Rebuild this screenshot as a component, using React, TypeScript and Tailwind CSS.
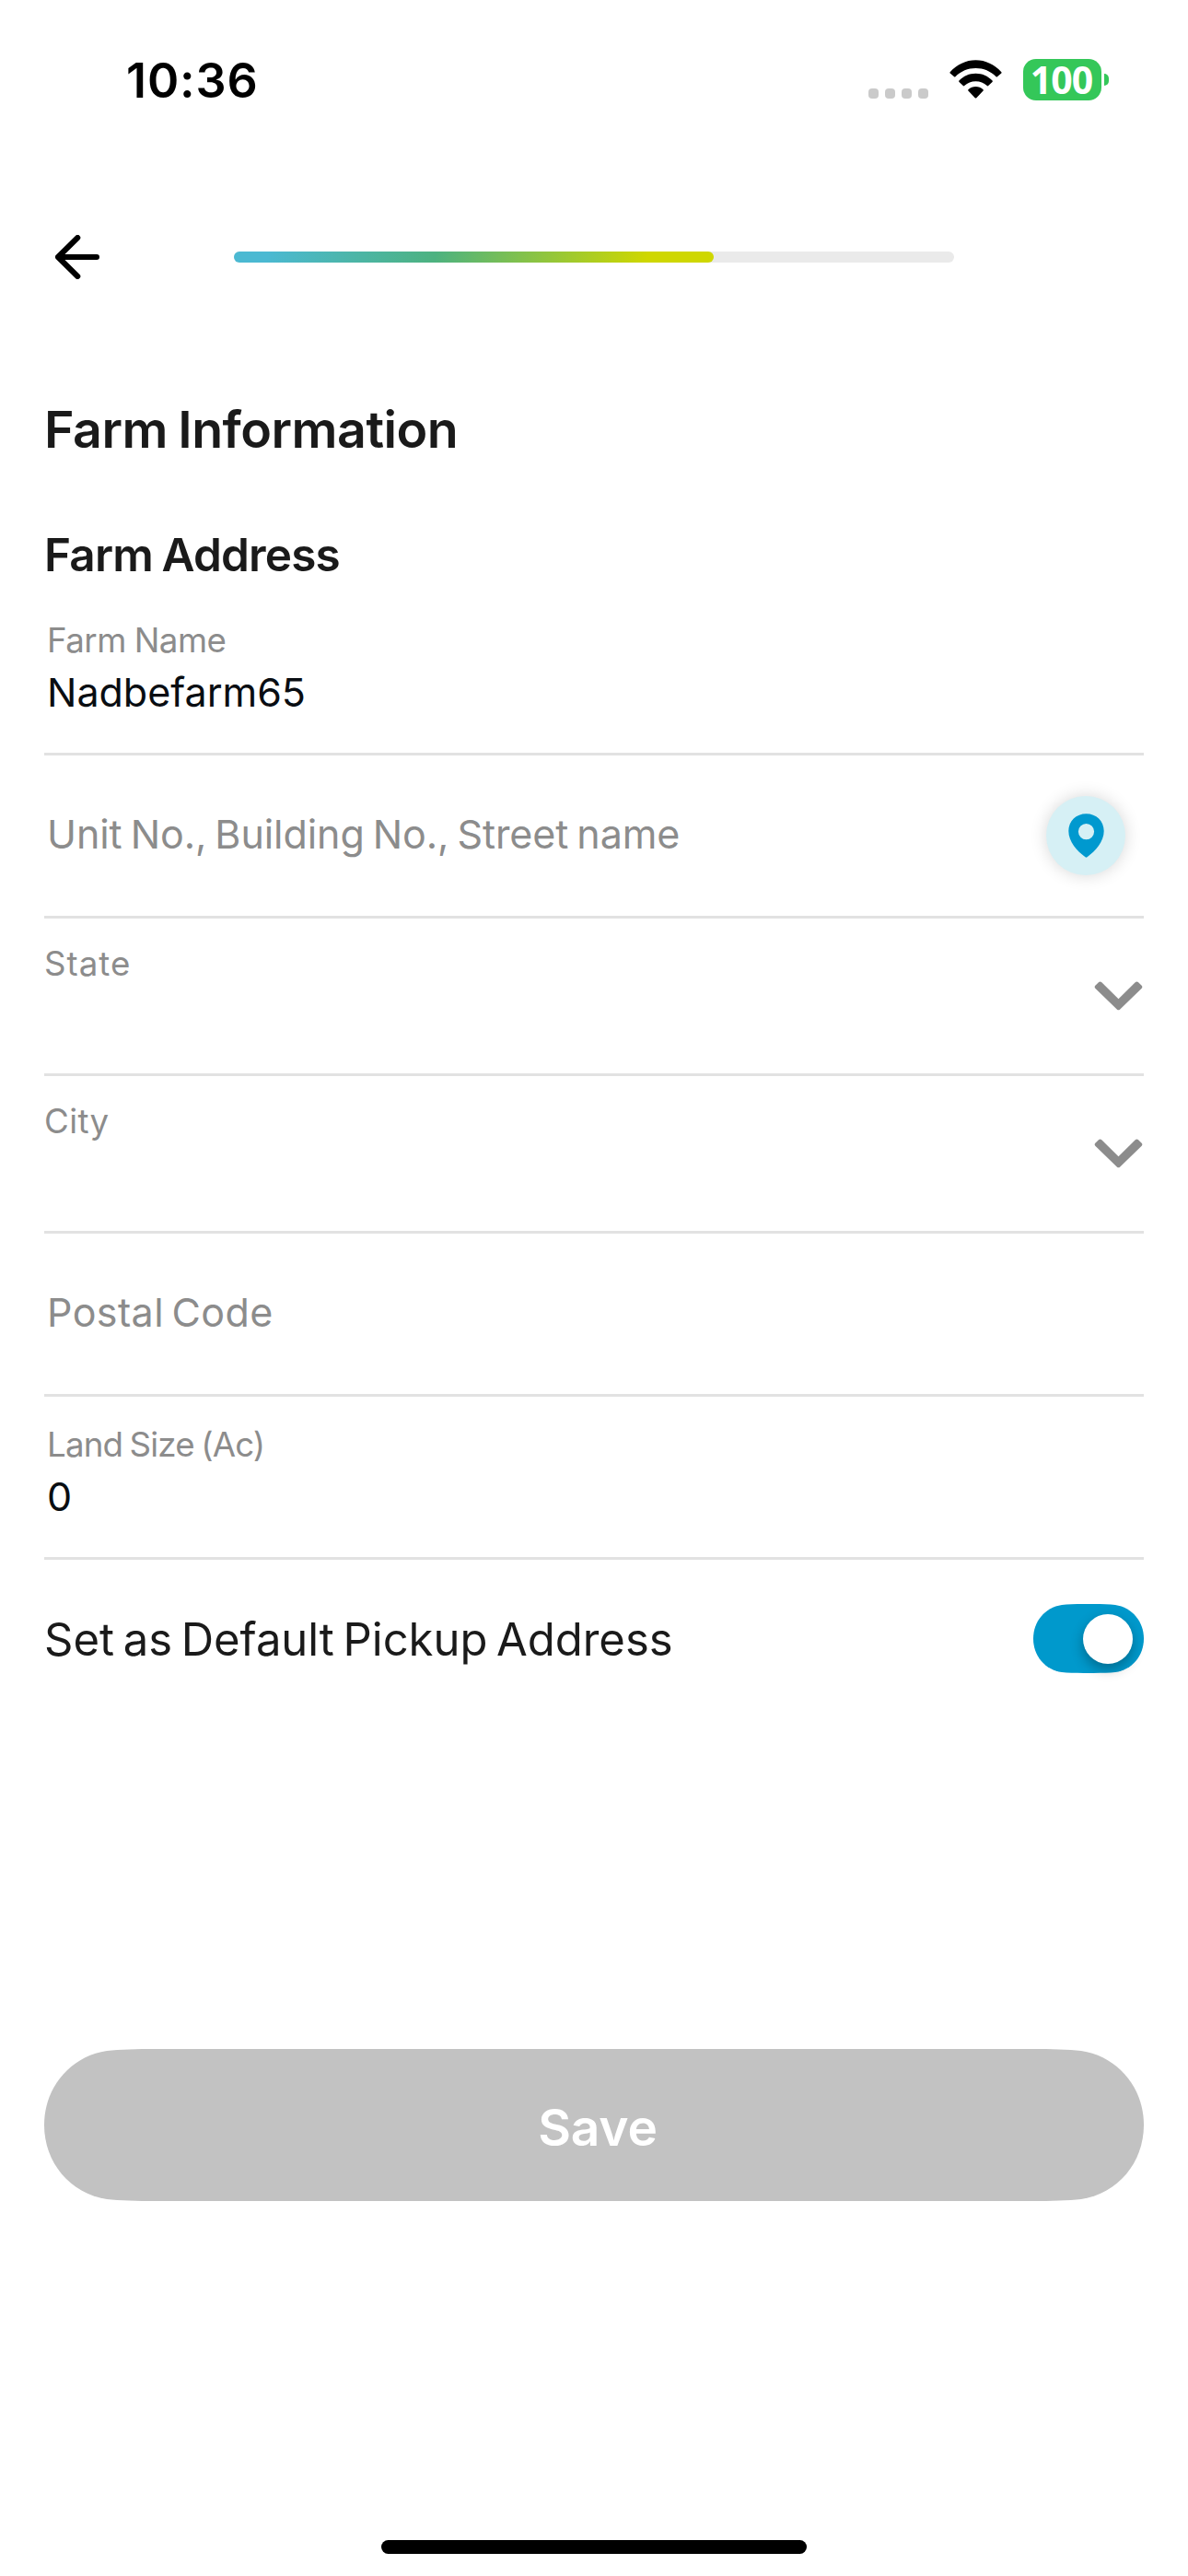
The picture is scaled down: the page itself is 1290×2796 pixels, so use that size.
import type { ReactNode } from "react";

function StatusBar() {
  return (
    <div className="flex h-[230px] items-start justify-between pl-[137px] pr-[86px]">
      <span className="mt-[58px] text-[52px] leading-[60px] font-semibold tracking-[0.9px] text-black">
        10:36
      </span>
      <div className="mt-16 flex items-start">
        <div className="mt-8 flex gap-[7px]">
          {[0, 1, 2, 3].map((dot) => (
            <span key={dot} className="size-[11px] rounded-[4px] bg-[#cacaca]" />
          ))}
        </div>
        <svg className="mt-px ml-[23px] h-[42px] w-[57px]" viewBox="0 0 57 42" fill="#000">
          <path d="M0.6 13.2 C8 5 18 0.3 28.5 0.3 C39 0.3 49 5 56.4 13.2 Q56.9 13.9 56.3 14.5 L51.9 18.3 Q51.2 18.9 50.6 18.2 C44.5 12 37 8.9 28.5 8.9 C20 8.9 12.5 12 6.4 18.2 Q5.8 18.9 5.1 18.3 L0.7 14.5 Q0.1 13.9 0.6 13.2Z" />
          <path d="M10.4 22.6 C15.5 17.5 21.5 14.8 28.5 14.8 C35.5 14.8 41.5 17.5 46.6 22.6 Q47.2 23.3 46.5 23.9 L42.2 28.1 Q41.5 28.7 40.8 28.1 C37.2 25 33.3 23.3 28.5 23.3 C23.7 23.3 19.8 25 16.2 28.1 Q15.5 28.7 14.8 28.1 L10.5 23.9 Q9.8 23.3 10.4 22.6Z" />
          <path d="M20.4 32.2 C22.8 30.1 25.5 29 28.5 29 C31.5 29 34.2 30.1 36.6 32.2 Q37.3 32.9 36.6 33.6 L29.3 41.2 Q28.5 42 27.7 41.2 L20.4 33.6 Q19.7 32.9 20.4 32.2Z" />
        </svg>
        <div className="ml-[23px] flex items-center">
          <span className="flex h-[45px] w-[85px] items-center justify-center rounded-[14px] bg-[#34c759] pr-0.5 font-['Noto_Sans',sans-serif] text-[41px] leading-[45px] font-bold tracking-[-1px] text-white">
            100
          </span>
          <span className="ml-[3px] h-[13px] w-[5px] rounded-r-full bg-[#34c759]" />
        </div>
      </div>
    </div>
  );
}

function ProgressHeader() {
  return (
    <div className="flex h-[98px] items-center pl-[60px]">
      <svg
        className="h-[48px] w-[48px]"
        viewBox="0 0 48 48"
        fill="none"
        stroke="#000"
        strokeWidth="6"
        strokeLinecap="round"
        strokeLinejoin="round"
      >
        <path d="M24.3 3 L3 24 L24.3 45 M3 24 H45" />
      </svg>
      <div className="ml-[146px] h-3 w-[782px] rounded-full bg-[#eaeaea]">
        <div className="h-3 w-[521px] rounded-full bg-[linear-gradient(105deg,#4bb9d2_7%,#4db280_42%,#cfd700_86%)]" />
      </div>
    </div>
  );
}

function Row({ className, children }: { className: string; children: ReactNode }) {
  return <div className={`flex border-b-[3px] border-[#e2e2e2] ${className}`}>{children}</div>;
}

function FilledField({
  label,
  value,
  labelClass,
}: {
  label: string;
  value: string;
  labelClass: string;
}) {
  return (
    <Row className="h-[177px] flex-col pt-[29px] pl-[3px]">
      <span className={`text-[36.7px] leading-[46px] text-[#8c8c8c] ${labelClass}`}>{label}</span>
      <span className="mt-1.5 text-[43px] leading-[54px] text-[#090d12]">{value}</span>
    </Row>
  );
}

function SelectField({ label, labelClass }: { label: string; labelClass: string }) {
  return (
    <Row className="h-[171px] items-center justify-between">
      <span className={`self-start pt-[26px] text-[36.7px] leading-[46px] text-[#8c8c8c] ${labelClass}`}>
        {label}
      </span>
      <svg className="mr-px h-8 w-[53px]" viewBox="0 0 53 32" fill="#8c8c8c">
        <path d="M1.3 4.7 L4.9 1.2 Q6.6 -0.4 8.3 1.2 L26.5 19.2 L44.7 1.2 Q46.4 -0.4 48.1 1.2 L51.7 4.7 Q53 6.2 51.7 7.7 L28 30.7 Q26.5 32 25 30.7 L1.3 7.7 Q0 6.2 1.3 4.7Z" />
      </svg>
    </Row>
  );
}

function LocationButton() {
  return (
    <button className="mr-5 flex size-[86px] items-center justify-center rounded-full bg-[#d6f0f5] shadow-[0_0_18px_rgba(0,0,0,0.16)]">
      <svg className="h-12 w-[39px]" viewBox="0 0 39 48">
        <path
          fill="#0099cf"
          fillRule="evenodd"
          d="M19.5 0.2 C8.6 0.2 0.3 8.2 0.3 19 C0.3 30.5 9.5 40.5 18.5 47.3 Q19.5 48 20.5 47.3 C29.5 40.5 38.7 30.5 38.7 19 C38.7 8.2 30.4 0.2 19.5 0.2Z M19.5 11 a8.6 8.6 0 1 1 0 17.2 a8.6 8.6 0 1 1 0 -17.2Z"
        />
      </svg>
    </button>
  );
}

function Toggle() {
  return (
    <button className="relative flex h-[75px] w-[120px] items-center justify-end pr-3">
      <span className="absolute inset-0 bg-[#0099cc] [clip-path:path('M0_37.5C0_19_12.5_3.6_31_0.9C37_0.2_45_0_55_0H65C75_0_83_0.2_89_0.9C107.5_3.6_120_19_120_37.5C120_56_107.5_71.4_89_74.1C83_74.8_75_75_65_75H55C45_75_37_74.8_31_74.1C12.5_71.4_0_56_0_37.5Z')]" />
      <span className="relative size-[54px] rounded-full bg-white shadow-[0_6px_14px_rgba(0,0,0,0.3)]" />
    </button>
  );
}

export default function App() {
  return (
    <div className="flex h-[2796px] w-[1290px] flex-col overflow-hidden bg-white font-['Inter',sans-serif]">
      <StatusBar />
      <ProgressHeader />
      <main className="flex flex-col px-12">
        <h1 className="mt-[103px] text-[55.5px] leading-[70px] font-semibold tracking-[-0.53px] text-[#1a1a1a] [word-spacing:-2px]">
          Farm Information
        </h1>
        <h2 className="mt-[71px] text-[49.5px] leading-[60px] font-semibold tracking-[-0.85px] text-[#1a1a1a] [word-spacing:-2px]">
          Farm Address
        </h2>
        <div className="mt-[11px]">
          <FilledField
            label="Farm Name"
            value="Nadbefarm65"
            labelClass="tracking-[-0.5px] [word-spacing:-1px]"
          />
          <Row className="h-[177px] items-center justify-between pl-[3px]">
            <span className="pb-1 text-[43px] leading-[54px] tracking-[-0.07px] text-[#8c8c8c] [word-spacing:-3px]">
              Unit No., Building No., Street name
            </span>
            <LocationButton />
          </Row>
          <SelectField label="State" labelClass="tracking-[1px]" />
          <SelectField label="City" labelClass="tracking-[0.37px]" />
          <Row className="h-[177px] items-center pl-[3px]">
            <span className="pb-1 text-[43px] leading-[54px] tracking-[0.4px] text-[#8c8c8c] [word-spacing:-4px]">
              Postal Code
            </span>
          </Row>
          <FilledField
            label="Land Size (Ac)"
            value="0"
            labelClass="tracking-[-0.85px] [word-spacing:-2px]"
          />
        </div>
        <div className="mt-12 flex h-[75px] items-center justify-between">
          <span className="pt-0.5 text-[49px] leading-[60px] tracking-[-0.04px] text-[#1a1a1a] [word-spacing:-4px]">
            Set as Default Pickup Address
          </span>
          <Toggle />
        </div>
        <button className="mt-[408px] flex h-[165px] w-full items-center justify-center bg-[#c2c2c2] pt-[5px] pl-2 text-[55px] leading-[70px] font-semibold tracking-[-0.2px] text-white [clip-path:path('M0_82.5C0_42_28_8_68_2C82_0.4_100_0_122_0H1072C1094_0_1112_0.4_1126_2C1166_8_1194_42_1194_82.5C1194_123_1166_157_1126_163C1112_164.6_1094_165_1072_165H122C100_165_82_164.6_68_163C28_157_0_123_0_82.5Z')]">
          Save
        </button>
      </main>
      <div className="mx-auto mt-[368px] h-[15px] w-[462px] shrink-0 rounded-full bg-black" />
    </div>
  );
}
